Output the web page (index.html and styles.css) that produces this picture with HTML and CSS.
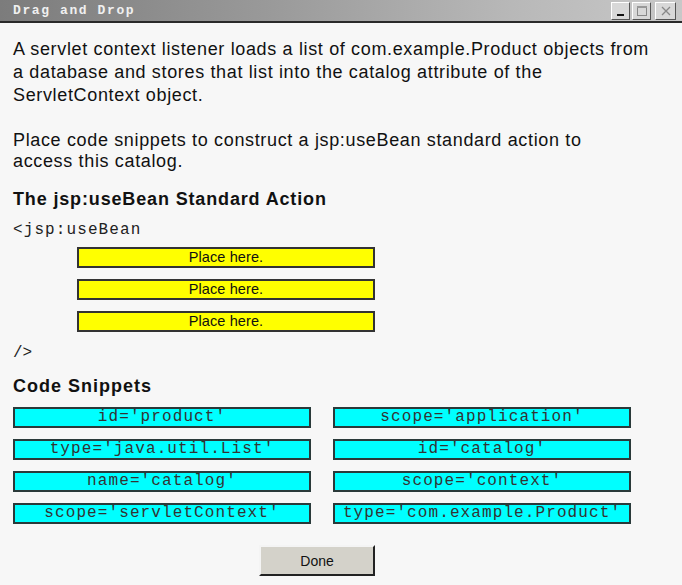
FILE: index.html
```html
<!DOCTYPE html>
<html>
<head>
<meta charset="utf-8">
<link rel="stylesheet" href="styles.css">
</head>
<body>
<div class="window">
  <div class="titlebar">
    <span class="title">Drag and Drop</span>
    <div class="controls">
      <span class="wbtn wmin"><svg width="12" height="12" viewBox="0 0 12 12"><rect x="2" y="9" width="7" height="2" fill="#111"/></svg></span>
      <span class="wbtn wmax"><svg width="12" height="12" viewBox="0 0 12 12"><rect x="1.5" y="1.5" width="9" height="9" fill="none" stroke="#888" stroke-width="1"/><rect x="1" y="1" width="10" height="2" fill="#999"/></svg></span>
      <span class="wbtn wclose"><svg width="12" height="12" viewBox="0 0 12 12"><path d="M2 2 L10 10 M10 2 L2 10" stroke="#888" stroke-width="1.3"/></svg></span>
    </div>
  </div>
  <div class="content">
    <p class="para para1">A servlet context listener loads a list of com.example.Product objects from a database and stores that list into the catalog attribute of the ServletContext object.</p>
    <p class="para para2">Place code snippets to construct a jsp:useBean standard action to access this catalog.</p>
    <h2 class="heading h1">The jsp:useBean Standard Action</h2>
    <div class="code code-open">&lt;jsp:useBean</div>
    <div class="slots">
      <div class="slot">Place here.</div>
      <div class="slot">Place here.</div>
      <div class="slot">Place here.</div>
    </div>
    <div class="code code-close">/&gt;</div>
    <h2 class="heading h2">Code Snippets</h2>
    <div class="snippets">
      <div class="snip">id='product'</div>
      <div class="snip">scope='application'</div>
      <div class="snip">type='java.util.List'</div>
      <div class="snip">id='catalog'</div>
      <div class="snip">name='catalog'</div>
      <div class="snip">scope='context'</div>
      <div class="snip">scope='servletContext'</div>
      <div class="snip">type='com.example.Product'</div>
    </div>
    <div class="actions">
      <button class="done">Done</button>
    </div>
  </div>
</div>
</body>
</html>
```
FILE: styles.css
```css
html, body {
  margin: 0;
  padding: 0;
  background: #f7f7f7;
}
.window {
  width: 682px;
  height: 585px;
  background: #f7f7f7;
  overflow: hidden;
}
.titlebar {
  height: 21px;
  border-bottom: 2px solid #2a2a2a;
  background: linear-gradient(to right, #7c7c7c 0%, #9a9a9a 40%, #b8b8b8 75%, #c8c8c8 100%);
  display: flex;
  align-items: center;
  justify-content: space-between;
  padding: 0 6px 0 13px;
}
.title {
  font-family: "Liberation Mono", monospace;
  font-weight: bold;
  font-size: 13px;
  letter-spacing: 1.6px;
  color: #f0f0f0;
}
.controls {
  display: flex;
  gap: 2px;
  align-items: center;
}
.wbtn {
  width: 17px;
  height: 16px;
  background: #d8d8d8;
  border-top: 1px solid #fff;
  border-left: 1px solid #fff;
  border-right: 1px solid #555;
  border-bottom: 1px solid #555;
  display: flex;
  align-items: center;
  justify-content: center;
}
.wclose { margin-left: 2px; width: 19px; }
.content {
  padding: 15px 13px 0 13px;
  font-family: "Liberation Sans", Arial, sans-serif;
  color: #111;
}
.para {
  margin: 0;
  font-size: 18px;
  line-height: 23px;
  letter-spacing: 0.65px;
}
.para1 {
  max-width: 652px;
}
.para2 {
  margin-top: 23px;
  line-height: 21px;
  max-width: 600px;
}
.heading {
  margin: 0;
  font-size: 18px;
  font-weight: bold;
  line-height: 22px;
}
.h1 { margin-top: 16px; letter-spacing: 0.85px; }
.code {
  font-family: "Liberation Mono", "Courier New", monospace;
  font-size: 16px;
  line-height: 20px;
  color: #222;
}
.code-open {
  margin-top: 10px;
  letter-spacing: 1.1px;
}
.slots {
  margin: 7px 0 0 64px;
  display: flex;
  flex-direction: column;
  gap: 11px;
  width: 298px;
}
.slot {
  height: 17px;
  background: #ffff00;
  border: 2px solid #333;
  font-size: 14.5px;
  line-height: 17px;
  text-align: center;
  color: #111;
  letter-spacing: 0.1px;
}
.code-close {
  margin-top: 11px;
}
.h2 { margin-top: 12px; letter-spacing: 1px; }
.snippets {
  margin-top: 10px;
  display: grid;
  grid-template-columns: 298px 298px;
  column-gap: 22px;
  row-gap: 11px;
}
.snip {
  height: 17px;
  background: #00ffff;
  border: 2px solid #2a3a3a;
  font-family: "Liberation Mono", "Courier New", monospace;
  font-size: 16px;
  line-height: 17px;
  letter-spacing: 1.1px;
  text-align: center;
  color: #333;
}
.actions {
  margin-top: 21px;
  padding-left: 246px;
}
.done {
  width: 116px;
  height: 31px;
  background: #d4d2ca;
  border-top: 2px solid #f4f4f4;
  border-left: 2px solid #f4f4f4;
  border-right: 2px solid #222;
  border-bottom: 2px solid #222;
  font-family: "Liberation Sans", Arial, sans-serif;
  font-size: 14px;
  color: #111;
  padding: 0;
}
```
